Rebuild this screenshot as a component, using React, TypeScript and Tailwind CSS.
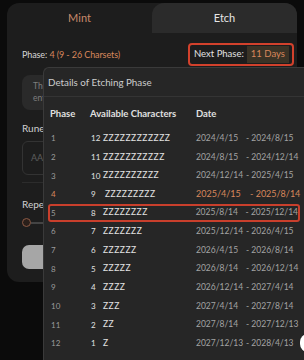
import React from 'react';

const rows = [
    { phase: '1', n: '12', z: 'ZZZZZZZZZZZZ', from: '2024/4/15', to: '2024/8/15' },
    { phase: '2', n: '11', z: 'ZZZZZZZZZZZ', from: '2024/8/15', to: '2024/12/14' },
    { phase: '3', n: '10', z: 'ZZZZZZZZZZ', from: '2024/12/14', to: '2025/4/15' },
    { phase: '4', n: '9', z: 'ZZZZZZZZZ', from: '2025/4/15', to: '2025/8/14', current: true },
    { phase: '5', n: '8', z: 'ZZZZZZZZ', from: '2025/8/14', to: '2025/12/14', next: true },
    { phase: '6', n: '7', z: 'ZZZZZZZ', from: '2025/12/14', to: '2026/4/15' },
    { phase: '7', n: '6', z: 'ZZZZZZ', from: '2026/4/15', to: '2026/8/14' },
    { phase: '8', n: '5', z: 'ZZZZZ', from: '2026/8/14', to: '2026/12/14' },
    { phase: '9', n: '4', z: 'ZZZZ', from: '2026/12/14', to: '2027/4/14' },
    { phase: '10', n: '3', z: 'ZZZ', from: '2027/4/14', to: '2027/8/14' },
    { phase: '11', n: '2', z: 'ZZ', from: '2027/8/14', to: '2027/12/13' },
    { phase: '12', n: '1', z: 'Z', from: '2027/12/13', to: '2028/4/13' },
];

function PhaseRow({ row }: { row: (typeof rows)[number] }) {
    const dateColor = row.current ? 'text-[#d8875c]' : 'text-[#a3a3a3]';
    return (
        <div
            className={`flex items-center h-[18.64px] whitespace-nowrap ${
                row.next ? 'ml-[4px] w-[252px] border-2 border-[#c93f2c] rounded-[3px]' : ''
            }`}
        >
            <span
                className={`text-[8px] ${row.next ? 'w-[40px] pl-[1px]' : 'w-[46px] pl-[7px]'} ${
                    row.current ? 'text-[#d8875c]' : 'text-[#9b9b9b]'
                }`}
            >
                {row.phase}
            </span>
            <span className="w-[106px] flex items-center text-[#e2e2e2]">
                <span className="w-[13px] pl-[1px] text-[8px]">{row.n}</span>
                <span className={`text-[8.5px] tracking-[0.5px] ${row.current ? 'ml-[2px]' : ''}`}>{row.z}</span>
            </span>
            <span className={`w-[50px] text-[8.5px] ${dateColor} ${row.current ? 'text-[9px]' : ''}`}>
                {row.from}
            </span>
            <span className={`text-[8.5px] ${dateColor} ${row.current ? 'ml-[4px] text-[9px]' : ''}`}>
                - {row.to}
            </span>
        </div>
    );
}

export default function App() {
    return (
        <div
            className="relative w-[304px] h-[360px] overflow-hidden bg-[#0b0b0b] pt-[3px] pl-[7px]"
            style={{ fontFamily: 'Lato, "Noto Sans", sans-serif' }}
        >
            {/* mint / etch card */}
            <div className="w-[290px] h-[279px] rounded-[12px] bg-[#1d1d1d] overflow-hidden">
                <div className="grid grid-cols-2 h-[30px]">
                    <div className="flex items-center justify-center text-[11px] text-[#c98a6b]">Mint</div>
                    <div className="flex items-center justify-center text-[11px] text-[#e6e6e6] bg-[#2b2b2b] rounded-tl-[12px]">
                        Etch
                    </div>
                </div>

                <div className="flex items-center justify-between pl-[15px] pr-[3px] mt-[10px] h-[23px]">
                    <span className="text-[9px] tracking-[-0.1px] text-[#d6d6d6]">
                        Phase: <span className="text-[#d8875c]">4 (9 - 26 Charsets)</span>
                    </span>
                    <div className="flex items-center h-[23px] w-[106px] border-2 border-[#d2412c] rounded-[4px] pl-[4px] gap-[3px]">
                        <span className="text-[9.5px] text-[#e2e2e2]">Next Phase:</span>
                        <span className="text-[9.5px] text-[#d8875c] bg-[#3a3326] px-[4px] h-[17px] flex items-center">
                            11 Days
                        </span>
                    </div>
                </div>

                <div className="px-[15px]">
                    <div className="mt-[9px] h-[35px] w-[28px] rounded-l-[8px] bg-[#2a2a2a] pl-[11px] py-[5px] text-[8.5px] leading-[12px] text-[#7e7e7e] overflow-hidden">
                        <div>The</div>
                        <div>ent</div>
                    </div>
                    <div className="mt-[11px] text-[10px] text-[#cfcfcf]">Rune</div>
                    <div className="mt-[5px] h-[34px] rounded-[6px] border border-[#333] px-[8px] flex items-center text-[9px] text-[#5e5e5e]">
                        AAAA
                    </div>
                    <div className="mt-[7px] h-px bg-[#2c2c2c]" />
                    <div className="mt-[14px] text-[10px] text-[#cfcfcf]">Repeat</div>
                    <div className="mt-[6px] flex items-center">
                        <div className="w-[9px] h-[9px] rounded-full border border-[#8c5a45] bg-[#2a1f1a]" />
                        <div className="flex-1 h-[2px] bg-[#444]" />
                    </div>
                    <div className="mt-[18px] h-[24px] rounded-[7px] bg-[#a6a6a6]" />
                </div>
            </div>

            {/* details overlay */}
            <div className="absolute left-[43px] top-[67px] w-[270px] h-[300px] rounded-tl-[6px] bg-[#262626] border-l border-t border-[#3a3a3a]">
                <div className="h-[29px] flex items-center pl-[4px] text-[9.8px] text-[#cdcdcd] border-b border-[#343434]">
                    Details of Etching Phase
                </div>
                <div>
                    <div className="flex items-center h-[18px] mt-[8px] text-[9.5px] font-bold text-[#e0e0e0] whitespace-nowrap">
                        <span className="w-[46px] pl-[6px]">Phase</span>
                        <span className="w-[106px]">Available Characters</span>
                        <span>Date</span>
                    </div>
                    <div className="mt-[6px]">
                        {rows.map((r) => (
                            <PhaseRow key={r.phase} row={r} />
                        ))}
                    </div>
                </div>
            </div>

            <div className="absolute right-[-12px] top-[334px] w-[16px] h-[18px] rounded-full bg-white" />
        </div>
    );
}
